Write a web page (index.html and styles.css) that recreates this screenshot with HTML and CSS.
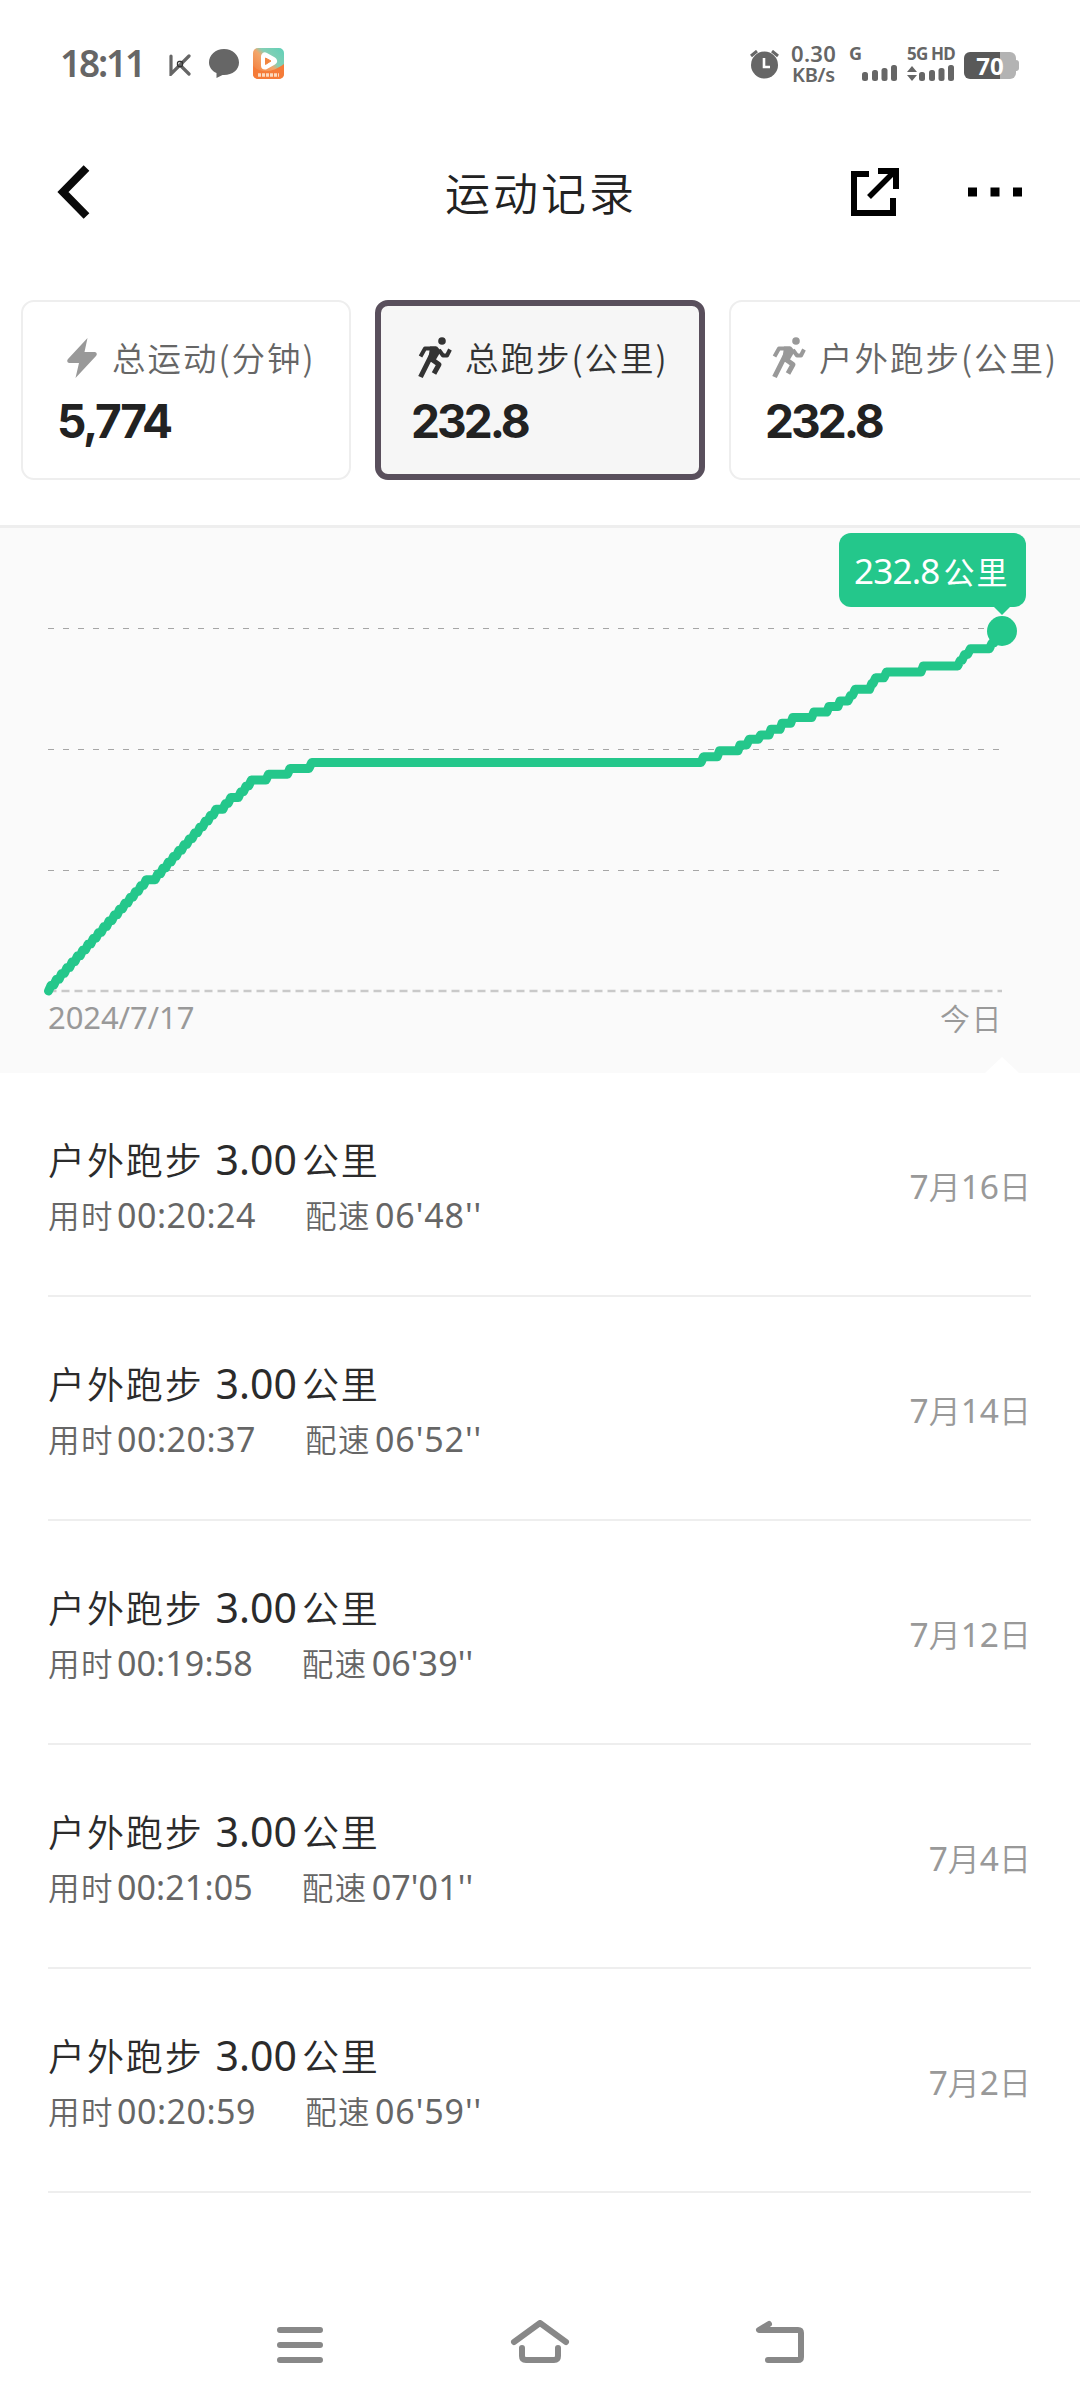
FILE: index.html
```html
<!DOCTYPE html>
<html lang="zh-CN">
<head>
<meta charset="utf-8">
<title>运动记录</title>
<link rel="stylesheet" href="styles.css">
</head>
<body>
<svg width="0" height="0" class="defs">
  <symbol id="runner" viewBox="0 0 36 44">
    <g fill="none" stroke="currentColor" stroke-linejoin="round">
      <path d="M3.500 20.500 8 12.500H19" stroke-width="4"/>
      <path d="M22 14 26 19.500 30 19.500 33 13.500" stroke-width="4"/>
      <path d="M17.500 13 12 24 3.500 41" stroke-width="5"/>
      <path d="M15 23.500 22 28.500 17 37.500" stroke-width="5"/>
    </g>
    <path d="M13 10.500H20L24 15 17.500 26H11Z" fill="currentColor"/>
    <circle cx="25" cy="5" r="3.800" fill="currentColor"/>
  </symbol>
</svg>

<div class="status">
  <span class="time">18:11</span>
  <svg class="s-k" width="22" height="22" viewBox="0 0 22 22" fill="none" stroke="#666" stroke-width="3.200" stroke-linecap="round"><path d="M2 2V20L20 2M11 11 20 20"/><rect x="8.500" y="7.500" width="5" height="5" rx="1.500" stroke="#333" stroke-width="1.300"/></svg>
  <svg class="s-msg" width="30" height="29" viewBox="0 0 30 29" fill="#666"><path d="M15 0C23.500 0 30 6 30 13.500S23.500 26 15 26H13.500L7.500 29V24C3 22 0 18 0 13.500 0 6 6.500 0 15 0Z"/></svg>
  <svg class="s-app" width="31" height="31" viewBox="0 0 31 31">
    <defs><linearGradient id="app" x1="0" y1="1" x2="1" y2="0"><stop offset="0" stop-color="#f4702c"/><stop offset=".5" stop-color="#f2a66b"/><stop offset=".62" stop-color="#86cfb4"/><stop offset="1" stop-color="#5fd0b8"/></linearGradient></defs>
    <rect width="31" height="31" rx="5" fill="url(#app)"/>
    <path d="M0 18C9 27 22 23 31 16V26A5 5 0 0 1 26 31H5A5 5 0 0 1 0 26Z" fill="#f57b38"/>
    <path d="M12 8.500V17.500L20 13Z" fill="none" stroke="#fff" stroke-width="8" stroke-linejoin="round"/>
    <path d="M12.500 10V16.500L18 13Z" fill="#f2853f" stroke="#f2853f" stroke-linejoin="round"/>
    <path d="M5 27H26" stroke="#fcd9bd" stroke-width="3.500" stroke-dasharray="3 1"/>
  </svg>
  <svg class="s-alarm" width="29" height="29" viewBox="0 0 29 29"><circle cx="14.500" cy="15" r="13.500" fill="#666"/><path d="M1 6 7 1M28 6 22 1" stroke="#666" stroke-width="3"/><path d="M14 8V17H20" fill="none" stroke="#fff" stroke-width="2.600"/></svg>
  <div class="rate"><span>0.30</span><span>KB/s</span></div>
  <div class="sim sim-a"><span>G</span>
    <svg width="36" height="18" viewBox="0 0 36 18" fill="#666"><rect y="8" width="6" height="9" rx="2.500"/><rect x="10" y="6" width="6" height="11" rx="2.500"/><rect x="19.500" y="4" width="6" height="13" rx="2.500"/><rect x="29" y="1" width="6" height="16" rx="2.500"/></svg></div>
  <div class="sim sim-b"><span>5G HD</span>
    <svg width="48" height="18" viewBox="0 0 48 18" fill="#666"><path d="M0 8 5 2 10 8ZM0 11 5 17 10 11Z"/><rect x="12" y="8" width="6" height="9" rx="2.500"/><rect x="22" y="6" width="6" height="11" rx="2.500"/><rect x="31.500" y="4" width="6" height="13" rx="2.500"/><rect x="41" y="1" width="6" height="16" rx="2.500"/></svg></div>
  <div class="battery"><span>70</span></div>
</div>

<header class="header">
  <svg width="34" height="54" viewBox="0 0 34 54" fill="none" stroke="#0a0a0a" stroke-width="8"><path d="M29.500 3 6 27 29.500 51"/></svg>
  <h1>运动记录</h1>
  <svg class="share" width="48" height="48" viewBox="0 0 48 48" fill="none" stroke="#000" stroke-width="6"><path d="M18 6H3V45H42V30M27 3H45V21"/><path d="M18 29 43 4" stroke-width="5.500"/></svg>
  <svg class="more" width="54" height="10" viewBox="0 0 54 10"><path d="M0 .5H9V9.500H0ZM22.500 .5H31.500V9.500H22.500ZM45 .5H54V9.500H45Z"/></svg>
</header>

<section class="cards">
  <article class="card">
    <div class="card-label"><svg width="30" height="40" viewBox="0 0 30 40" fill="#999"><path d="M20.500 0 17.500 14H28Q31 15 29 18L8.500 40 12 25H2Q-1 24 1 21Z"/></svg><span>总运动(分钟)</span></div>
    <div class="card-value">5,774</div>
  </article>
  <article class="card active">
    <div class="card-label"><svg width="36" height="44"><use href="#runner"/></svg><span>总跑步(公里)</span></div>
    <div class="card-value">232.8</div>
  </article>
  <article class="card wide">
    <div class="card-label"><svg width="36" height="44"><use href="#runner"/></svg><span>户外跑步(公里)</span></div>
    <div class="card-value">232.8</div>
  </article>
</section>

<section class="chart">
  <svg class="plot" width="1080" height="471" viewBox="0 528 1080 471" fill="none">
    <path d="M48 628.500H1002M48 749.500H1002M48 870.500H1002" stroke="#a6a6a6" stroke-width="1.200" stroke-dasharray="6 9"/>
    <path d="M48.500 991H1002" stroke="#c9c9c9" stroke-width="2.500" stroke-dasharray="8 5"/>
    <path stroke="#24c78b" stroke-width="9" stroke-linecap="round" stroke-linejoin="round" d="M48.500 991
      l2.640-5.860h2.640l2.640-5.860h2.640l2.640-5.860h2.640l2.640-5.860h2.640l2.640-5.860h2.640l2.640-5.860h2.640
      l2.640-5.860h2.640l2.640-5.860h2.640l2.640-5.860h2.640l2.640-5.860h2.640l2.640-5.860h2.640l2.640-5.860h2.640
      l2.640-5.860h2.640l2.640-5.860h2.640l2.640-5.860h2.640l2.640-5.860h2.640l2.640-5.860h2.640l2.640-5.860h2.640
      l2.640-5.860h9
      l2.640-5.860h2.640l2.640-5.860h2.640l2.640-5.860h2.640l2.640-5.860h2.640l2.640-5.860h2.640l2.640-5.860h2.640
      l2.640-5.860h2.640l2.640-5.860h2.640l2.640-5.860h2.640l2.640-5.860h2.640l2.640-5.860h2.640l2.640-5.860h7
      l2.620-5.860h2.620l2.620-5.860h7.500l2.620-5.860h2.620l2.620-5.860h2.620l2.620-5.860
      L266 780.100 268.500 774.200H287.500L290 768.400H309L311.800 762.500H701L703.600 756.700H717.300L719.500 750.700H738L740 745H746.600L749.200 739.300H758.300L760.700 735H769L771 729.300H780L782 723.300H790.700L792.800 717.500H811.700L813.800 712H826.800L829 706.500H838L840 701H848L850.600 695.300H852.600L855.200 689.300H869.500L871.700 683.500H873L875.700 677.700H884L886.500 672H921L923.300 666H957.700L960.200 660.500H962L964.600 654.500H967.500L970.400 648.700H989.400L992 643H994L997 637 1001.800 631"/>
    <circle cx="1002" cy="631" r="15" fill="#24c78b"/>
  </svg>
  <div class="axis"><span class="num">2024/7/17</span><span>今日</span></div>
  <div class="tip"><span class="num">232.8</span>公里</div>
  <i class="notch"></i>
</section>

<main class="list">
  <div class="row"><div><p class="title">户外跑步<b>3.00</b>公里</p><p class="sub">用时<b>00:20:24</b><span>配速<b>06'48''</b></span></p></div><time><b>7</b>月<b>16</b>日</time></div>
  <div class="row"><div><p class="title">户外跑步<b>3.00</b>公里</p><p class="sub">用时<b>00:20:37</b><span>配速<b>06'52''</b></span></p></div><time><b>7</b>月<b>14</b>日</time></div>
  <div class="row narrow"><div><p class="title">户外跑步<b>3.00</b>公里</p><p class="sub">用时<b>00:19:58</b><span>配速<b>06'39''</b></span></p></div><time><b>7</b>月<b>12</b>日</time></div>
  <div class="row narrow"><div><p class="title">户外跑步<b>3.00</b>公里</p><p class="sub">用时<b>00:21:05</b><span>配速<b>07'01''</b></span></p></div><time><b>7</b>月<b>4</b>日</time></div>
  <div class="row"><div><p class="title">户外跑步<b>3.00</b>公里</p><p class="sub">用时<b>00:20:59</b><span>配速<b>06'59''</b></span></p></div><time><b>7</b>月<b>2</b>日</time></div>
</main>

<nav class="nav">
  <svg width="60" height="50" viewBox="0 0 60 50"><path d="M10 10H50M10 25H50M10 40H50"/></svg>
  <svg width="60" height="50" viewBox="0 0 60 50"><path d="M4 22 30 3 56 22M12 28V36Q12 40 16 40H44Q48 40 48 36V28"/></svg>
  <svg width="60" height="50" viewBox="0 0 60 50"><path d="M19 4 9 10H48Q51 10 51 13V37Q51 40 48 40H18"/></svg>
</nav>
</body>
</html>
```
FILE: styles.css
```css
* { box-sizing: border-box; margin: 0; padding: 0; }
body {
  width: 1080px;
  height: 2408px;
  overflow: hidden;
  background: #fff;
  font-family: "Noto Sans CJK SC", sans-serif;
  color: #222;
}
svg { display: block; flex: none; }
b { font-weight: 400; font-family: "Noto Sans", sans-serif; }
.num { font-family: "Noto Sans", sans-serif; font-weight: 400; }
.defs { position: absolute; }

.status {
  display: flex;
  align-items: flex-start;
  height: 130px;
  padding: 43px 0 0 60px;
  color: #666;
  font-family: "Noto Sans", sans-serif;
}
.time { width: 109px; font-size: 37px; font-weight: 600; line-height: 40px; letter-spacing: -2.200px; white-space: nowrap; }
.s-k { margin: 11px 18px 0 0; }
.s-msg { margin: 6px 14px 0 0; }
.s-app { margin: 5px 466px 0 0; }
.s-alarm { margin: 7px 12px 0 0; }
.rate { display: flex; flex-direction: column; width: 58px; font-weight: 600; line-height: 21px; white-space: nowrap; }
.rate span:first-child { font-size: 22px; letter-spacing: .3px; }
.rate span:last-child { font-size: 20px; padding-left: 1px; line-height: 22px; letter-spacing: -.3px; }
.sim { display: flex; flex-direction: column; font-size: 18px; font-weight: 700; line-height: 21px; white-space: nowrap; }
.sim-a { width: 58px; }
.sim-a svg { margin-left: 13px; }
.sim-b { width: 57px; font-size: 17px; letter-spacing: -.8px; }
.battery {
  position: relative;
  width: 52px;
  height: 27px;
  margin-top: 9px;
  border-radius: 6px;
  background: linear-gradient(90deg, #595959 70%, #b3b3b3 70%);
  color: #fff;
  font-size: 24px;
  font-weight: 700;
  line-height: 27px;
  text-align: center;
}
.battery::after { content: ""; position: absolute; left: 52px; top: 8px; width: 3px; height: 11px; border-radius: 0 3px 3px 0; background: #b3b3b3; }

.header { display: flex; align-items: center; height: 124px; padding: 0 57px; margin-bottom: 46px; }
.header h1 { margin-left: 354px; width: 406px; font-size: 45px; font-weight: 350; letter-spacing: 3px; line-height: 60px; padding-bottom: 1px; }
.more { margin-left: 69px; }

.cards { display: flex; gap: 24px; height: 225px; padding-left: 21px; overflow: hidden; }
.card { flex: none; width: 330px; height: 180px; padding: 30px 34px 0; border: 2px solid #eee; border-radius: 13px; white-space: nowrap; }
.card.wide { width: 366px; }
.card.active { border: 6px solid #594f5c; background: #f6f6f6; padding: 26px 30px 0; color: #333; }
.card-label { display: flex; align-items: center; gap: 12px; height: 48px; margin-left: 6px; color: #666; font-size: 33.500px; font-weight: 350; letter-spacing: 2px; }
.card-label svg { color: #999; margin-top: 3px; }
.card:first-child .card-label { margin-left: 10px; gap: 15px; }
.card.active .card-label, .card.active svg { color: #333; }
.card-value { padding-top: 5px; color: #222; font-family: Inter, sans-serif; font-size: 46px; font-weight: 700; line-height: 72px; letter-spacing: -3px; }
.card:first-child .card-value { letter-spacing: -2.300px; }

.chart { position: relative; height: 548px; border-top: 3px solid #eee; background: #fafafa; }
.axis { display: flex; justify-content: space-between; padding: 0 77px 0 48px; color: #999; font-size: 30px; line-height: 36px; letter-spacing: 1.500px; font-weight: 350; }
.axis .num { font-size: 31px; letter-spacing: -.1px; }
.tip {
  position: absolute;
  left: 839px;
  top: 5px;
  width: 187px;
  height: 74px;
  border-radius: 12px;
  background: #24c78b;
  color: #fff;
  font-size: 31px;
  line-height: 75px;
  letter-spacing: 2px;
  padding-left: 15px;
  white-space: nowrap;
}
.tip .num { font-size: 35px; margin-right: 4px; letter-spacing: -.8px; }
.tip::after { content: ""; position: absolute; left: 154px; top: 73px; border: 9px solid transparent; border-top-color: #24c78b; border-bottom: 0; }
.notch { position: absolute; left: 985px; bottom: 0; border: 17px solid transparent; border-bottom: 16px solid #fff; border-top: 0; }

.list { padding: 0 49px 0 48px; }
.row { display: flex; justify-content: space-between; height: 224px; padding-top: 58px; border-bottom: 2px solid #eee; white-space: nowrap; }
.title { height: 56px; font-size: 37px; line-height: 56px; letter-spacing: 1.900px; color: #2b2b2b; font-weight: 350; }
.title b { font-size: 41px; margin: 0 5px 0 12px; letter-spacing: 0; }
.sub { height: 54px; font-size: 31.500px; line-height: 54px; letter-spacing: 1.500px; color: #666; font-weight: 350; }
.sub b { font-size: 34px; margin-left: 3px; letter-spacing: .5px; }
.sub span { margin-left: 49px; }
.sub span b { margin-left: 4px; letter-spacing: .9px; }
.narrow .sub b { letter-spacing: .1px; }
.row time { height: 106px; font-size: 32px; line-height: 108px; color: #999; font-weight: 350; }
.row time b { font-size: 33.500px; }

.nav { display: flex; justify-content: center; gap: 180px; padding-top: 127px; fill: none; stroke: #888; stroke-width: 6; stroke-linecap: round; stroke-linejoin: round; }
```
